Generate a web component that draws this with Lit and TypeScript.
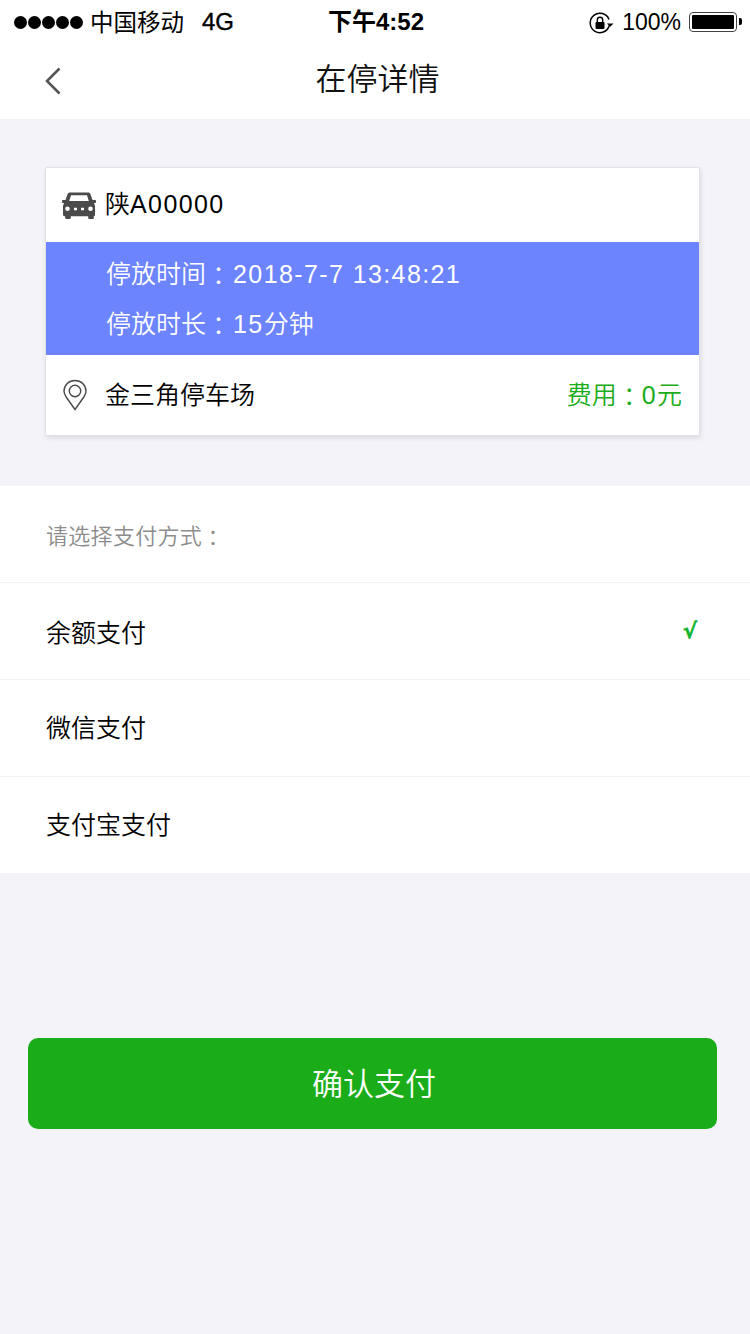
import { LitElement, html, css, svg } from "lit";
import { customElement, state } from "lit/decorators.js";

const carIcon = html`<svg class="car" viewBox="0 0 34 28" width="34" height="28">
  <path fill="#4a4a4a" fill-rule="evenodd" d="M8 1.500h18c1.200 0 2 .6 2.500 1.700L30.500 9H33c.6 0 1 .4 1 1v1.200c0 .5-.4.8-1 .8h-1l1 3v9c0 .7-.5 1.300-1.200 1.300v1.400c0 .8-.5 1.300-1.300 1.300h-3c-.8 0-1.300-.5-1.300-1.300v-1.400H8.800v1.400c0 .8-.5 1.300-1.300 1.300h-3c-.8 0-1.300-.5-1.300-1.300v-1.400C2.500 25.300 1 24.700 1 24v-9l1-3H1c-.6 0-1-.3-1-.8V10c0-.6.4-1 1-1h2.500l2-5.800C6 2.100 6.800 1.500 8 1.500zM9 4.300 7.200 10h19.600L25 4.300zM5.500 15.500a2.300 2.300 0 1 0 0 4.600 2.300 2.300 0 0 0 0-4.600zm23 0a2.300 2.300 0 1 0 0 4.600 2.300 2.300 0 0 0 0-4.600zM12 16.800v2.400h3v-2.400zm7 0v2.400h3v-2.400z"/>
</svg>`;

const pinIcon = html`<svg class="pin" viewBox="0 0 26 32" width="26" height="32">
  <path fill="none" stroke="#484848" stroke-width="1.400" d="M13 30.500 4.500 18.500C2.800 16.200 2 14.400 2 12.300 2 6.200 6.900 1.500 13 1.500s11 4.700 11 10.800c0 2.100-.8 3.900-2.500 6.200z"/>
  <circle cx="13" cy="12" r="5.700" fill="none" stroke="#484848" stroke-width="1.400"/>
</svg>`;

// rotation lock: open ring, padlock and the little arrow on the right
const rotationLock = svg`<path d="M20.300 14.500A9.700 9.700 0 1 1 20 8.500" fill="none" stroke="#000" stroke-width="1.500"/>
  <rect x="6.500" y="11" width="9" height="7" rx="1" fill="#000"/>
  <path d="M8.300 11V9a2.700 2.700 0 0 1 5.400 0v2" fill="none" stroke="#000" stroke-width="1.400"/>
  <path d="M18 12.500h6.500l-3.200 3.300z" fill="#000"/>`;

@customElement("app-root")
export class AppRoot extends LitElement {
  @state()
  payMethods = ["余额支付", "微信支付", "支付宝支付"];

  static styles = css`
    :host {
      display: block;
      width: 750px;
      height: 1334px;
      background: #f3f3f9;
      font-family: "Noto Sans CJK SC", sans-serif;
      font-weight: 350;
      color: #000;
      overflow: hidden;
    }

    .top {
      background: #fff;
      height: 119px;
    }

    .status {
      height: 44px;
      display: flex;
      align-items: center;
      padding: 0 9px 0 14px;
      font-family: "Liberation Sans", "Noto Sans CJK SC", sans-serif;
      font-weight: 400;
      font-size: 23.500px;
      position: relative;
    }

    .signal {
      display: flex;
      gap: 1px;
      margin-right: 7px;
    }

    .signal i {
      width: 13px;
      height: 13px;
      border-radius: 50%;
      background: #000;
    }

    .carrier {
      margin-top: -2px;
    }

    .net {
      margin-left: 18px;
      font-size: 24px;
      -webkit-text-stroke: 0.4px #000;
    }

    .clock {
      position: absolute;
      left: 328px;
      top: 6px;
      font-size: 24px;
      font-weight: 700;
      line-height: 32px;
    }

    .status-right {
      margin-left: auto;
      display: flex;
      align-items: center;
      font-size: 23px;
    }

    .lock {
      margin-right: 8px;
    }

    .battery {
      width: 48px;
      height: 20px;
      margin: 0 4px 0 8px;
      border: 1.500px solid #444;
      border-radius: 4px;
      padding: 2px;
      box-sizing: border-box;
      position: relative;
    }

    .battery::before {
      content: "";
      display: block;
      height: 100%;
      background: #000;
      border-radius: 1px;
    }

    .battery::after {
      content: "";
      position: absolute;
      right: -6px;
      top: 5px;
      width: 3px;
      height: 7px;
      background: #000;
      border-radius: 0 2px 2px 0;
    }

    .nav {
      height: 75px;
      display: flex;
      align-items: center;
      justify-content: center;
      position: relative;
      font-size: 31px;
      padding: 0 0 11px 5px;
      box-sizing: border-box;
      color: #111;
    }

    .back {
      position: absolute;
      left: 45px;
      top: 23px;
    }

    .card-wrap {
      padding: 48px 50px 50px 45px;
    }

    .card {
      background: #fff;
      border: 1px solid #e2e2e6;
      border-radius: 2px;
      box-shadow: 1px 2px 5px rgba(0, 0, 0, 0.1);
    }

    .num {
      font-family: "Liberation Sans", sans-serif;
      font-weight: 400;
      letter-spacing: 1.400px;
    }

    .colon {
      font-family: "Noto Sans CJK TC", sans-serif;
      line-height: 0;
      vertical-align: -2px;
    }

    .plate {
      height: 74px;
      display: flex;
      align-items: center;
      padding: 0 16px 7px;
      box-sizing: border-box;
      font-size: 25px;
    }

    .car {
      margin: 7px 9px 0 0;
    }

    .time {
      background: #6d84ff;
      color: #fff;
      height: 113px;
      padding: 5px 0 0 60px;
      box-sizing: border-box;
      font-size: 25px;
    }

    .time div {
      height: 50px;
      line-height: 50px;
    }

    .time .colon {
      margin-right: 2px;
    }

    .place {
      height: 80px;
      display: flex;
      align-items: center;
      padding: 0 17px 5px 16px;
      box-sizing: border-box;
      font-size: 25px;
    }

    .pin {
      margin: 5px 17px 0 0;
    }

    .fee {
      margin-left: auto;
      color: #1aad19;
    }

    .pay {
      background: #fff;
    }

    .row {
      height: 97px;
      display: flex;
      align-items: center;
      justify-content: space-between;
      padding: 0 46px 4px;
      box-sizing: border-box;
      font-size: 25px;
      border-bottom: 1px solid #f1f1f4;
    }

    .row.checked {
      padding-bottom: 0;
    }

    .row:last-child {
      height: 96px;
      border-bottom: none;
    }

    .row.label {
      padding-bottom: 0;
      color: #8c8c8c;
      font-size: 22px;
      letter-spacing: 0.300px;
    }

    .check {
      color: #0cb52c;
      font-size: 21px;
      font-weight: 700;
      margin-right: 7px;
      font-family: "DejaVu Sans", sans-serif;
      -webkit-text-stroke: 0.5px #0cb52c;
    }

    .confirm {
      display: block;
      width: 689px;
      height: 91px;
      margin: 165px 0 0 28px;
      padding: 0 0 5px 3px;
      border: 0;
      border-radius: 10px;
      background: #1aad19;
      color: #fff;
      font: inherit;
      font-size: 31px;
    }
  `;

  render() {
    const colon = html`<span class="colon">：</span>`;
    return html`
      <div class="top">
        <div class="status">
          <span class="signal">${[1, 2, 3, 4, 5].map(() => html`<i></i>`)}</span>
          <span class="carrier">中国移动</span>
          <span class="net">4G</span>
          <span class="clock">下午4:52</span>
          <span class="status-right">
            <svg class="lock" viewBox="0 0 25 23" width="25" height="23">${rotationLock}</svg>
            100%
            <span class="battery"></span>
          </span>
        </div>
        <div class="nav">
          <svg class="back" viewBox="0 0 16 28" width="16" height="28">
            <path d="M14.500 1.500 2 14l12.500 12.500" fill="none" stroke="#555" stroke-width="2.600"/>
          </svg>
          在停详情
        </div>
      </div>

      <div class="card-wrap">
        <div class="card">
          <div class="plate">${carIcon}<span>陕<span class="num">A00000</span></span></div>
          <div class="time">
            <div>停放时间${colon}<span class="num">2018-7-7 13:48:21</span></div>
            <div>停放时长${colon}<span class="num">15</span>分钟</div>
          </div>
          <div class="place">
            ${pinIcon}金三角停车场
            <span class="fee">费用${colon}<span class="num">0</span>元</span>
          </div>
        </div>
      </div>

      <div class="pay">
        <div class="row label"><span>请选择支付方式${colon}</span></div>
        ${this.payMethods.map(
          (name, i) => html`<div class="row ${i === 0 ? "checked" : ""}">
            <span>${name}</span>
            ${i === 0 ? html`<span class="check">√</span>` : ""}
          </div>`,
        )}
      </div>

      <button class="confirm">确认支付</button>
    `;
  }
}
